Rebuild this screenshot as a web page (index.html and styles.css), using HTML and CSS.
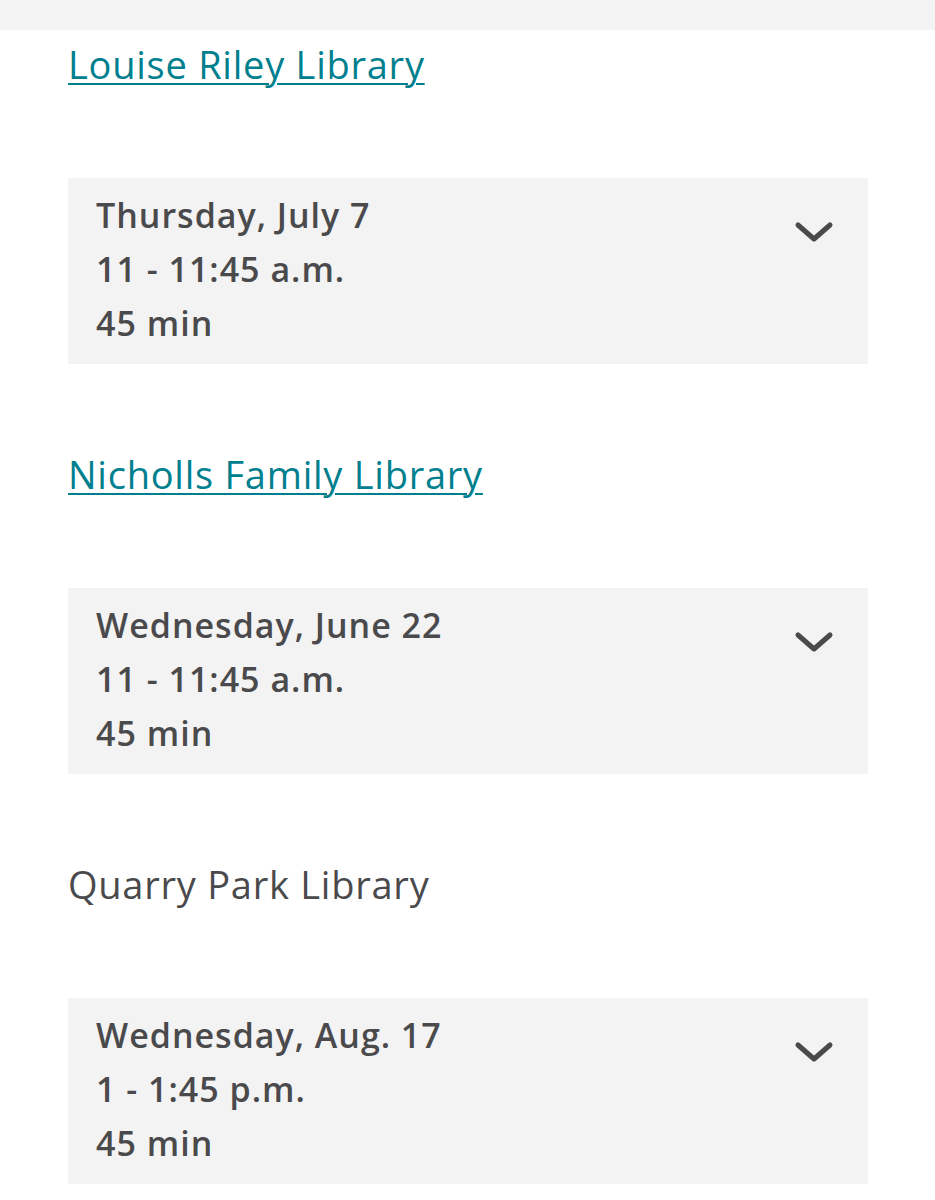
FILE: index.html
```html
<!DOCTYPE html>
<html lang="en">
<head>
    <meta charset="UTF-8">
    <meta name="viewport" content="width=device-width, initial-scale=1.0">
    <title>Library sessions</title>
    <link rel="stylesheet" href="styles.css">
</head>
<body>
    <div class="top-bar"></div>

    <div class="content">
        <div class="location">
            <h2 class="location-name"><a href="#">Louise Riley Library</a></h2>
            <div class="session">
                <div class="session-info">
                    <div>Thursday, July 7</div>
                    <div>11 - 11:45 a.m.</div>
                    <div>45 min</div>
                </div>
                <svg class="chevron" width="40" height="24" viewBox="0 0 40 24">
                    <polyline points="4,5 20,19 36,5" />
                </svg>
            </div>
        </div>

        <div class="location">
            <h2 class="location-name"><a href="#">Nicholls Family Library</a></h2>
            <div class="session">
                <div class="session-info">
                    <div>Wednesday, June 22</div>
                    <div>11 - 11:45 a.m.</div>
                    <div>45 min</div>
                </div>
                <svg class="chevron" width="40" height="24" viewBox="0 0 40 24">
                    <polyline points="4,5 20,19 36,5" />
                </svg>
            </div>
        </div>

        <div class="location">
            <h2 class="location-name">Quarry Park Library</h2>
            <div class="session">
                <div class="session-info">
                    <div>Wednesday, Aug. 17</div>
                    <div>1 - 1:45 p.m.</div>
                    <div>45 min</div>
                </div>
                <svg class="chevron" width="40" height="24" viewBox="0 0 40 24">
                    <polyline points="4,5 20,19 36,5" />
                </svg>
            </div>
        </div>
    </div>
</body>
</html>
```

FILE: styles.css
```css
* {
    margin: 0;
    padding: 0;
    box-sizing: border-box;
}

body {
    font-family: "Open Sans", "Noto Sans", sans-serif;
    background-color: #ffffff;
    color: #4a4a4c;
}

.top-bar {
    height: 30px;
    background-color: #f3f3f3;
}

.content {
    padding: 10px 67px 0 68px;
}

.location {
    margin-bottom: 86px;
}

.location-name {
    font-size: 38px;
    font-weight: 400;
    line-height: 48px;
    letter-spacing: 0.75px;
    margin-bottom: 90px;
    color: #4a4a4c;
}

.location-name a {
    color: #00808e;
    text-decoration: underline;
    text-decoration-thickness: 2px;
    text-underline-offset: 4px;
}

.session {
    display: flex;
    justify-content: space-between;
    align-items: flex-start;
    background-color: #f3f3f3;
    padding: 10px 34px 14px 28px;
}

.session-info {
    font-size: 34px;
    font-weight: 600;
    line-height: 54px;
    letter-spacing: 1px;
}

.chevron {
    margin-top: 32px;
}

.chevron polyline {
    fill: none;
    stroke: #4a4a4c;
    stroke-width: 5;
    stroke-linecap: round;
    stroke-linejoin: round;
}
```
